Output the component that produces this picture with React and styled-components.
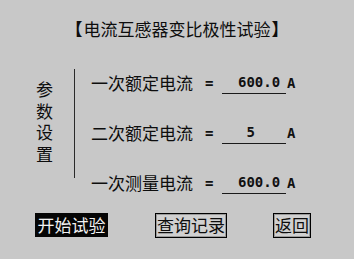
import React from 'react'
import styled, { createGlobalStyle, css } from 'styled-components'

const GlobalStyle = createGlobalStyle`
  html, body {
    margin: 0;
    padding: 0;
    background: #c8c8c8;
  }
  body {
    font-family: "Noto Sans CJK SC", "Noto Sans", sans-serif;
    color: #0d0d0d;
  }
`

const Screen = styled.div`
  width: 354px;
  height: 259px;
  box-sizing: border-box;
  padding-top: 20px;
  background: #c8c8c8;
  display: flex;
  flex-direction: column;
  overflow: hidden;
`

const Title = styled.h1`
  margin: 0 0 32px;
  font-size: 17px;
  line-height: 17px;
  font-weight: 400;
  text-align: center;
`

const Bracket = styled.span`
  font-weight: 700;
  margin: ${p => p.$open ? '0 1px 0 -3px' : '0 -3px 0 1px'};
`

const Body = styled.div`
  display: flex;
  align-items: flex-start;
  padding-left: 36px;
`

const SideLabel = styled.div`
  width: 16px;
  margin-top: 12px;
  writing-mode: vertical-rl;
  text-orientation: upright;
  font-size: 17px;
  line-height: 16px;
  letter-spacing: 4.7px;
`

const Divider = styled.div`
  width: 1px;
  height: 109px;
  margin: 0 16px 0 22px;
  background: #2a2a2a;
`

const Rows = styled.div`
  display: flex;
  flex-direction: column;
  gap: 27px;
  margin-top: 2px;
`

const Row = styled.div`
  display: flex;
  align-items: center;
  height: 23px;
`

const Label = styled.span`
  width: 114px;
  font-size: 17px;
  line-height: 23px;
`

const mono = css`
  font-family: "DejaVu Sans Mono", "Liberation Mono", monospace;
  font-size: 14px;
  font-weight: 700;
  color: #111;
`

const Equals = styled.span`
  ${mono}
  width: 17px;
`

const Field = styled.span`
  ${mono}
  box-sizing: border-box;
  width: 64px;
  height: 23px;
  line-height: 22px;
  padding-left: 16px;
  border-bottom: 1px solid #1a1a1a;
  white-space: pre;
`

const Unit = styled.span`
  ${mono}
  margin-left: 1px;
`

const Footer = styled.div`
  display: flex;
  align-items: flex-start;
  margin-top: 19px;
  padding-left: 35px;
`

const Button = styled.div`
  box-sizing: border-box;
  font-size: 17px;
  margin-right: ${p => p.$gap || 0}px;
  ${p => p.$active ? css`
    height: 24px;
    line-height: 24px;
    padding: 0 2.5px;
    background: #050505;
    color: #f2f2f2;
  ` : css`
    height: 25px;
    line-height: 21px;
    padding: 0 1px;
    border: 1px solid #000;
    box-shadow: inset 0 0 0 1px #9a9a9a;
    background: #d0d0d0;
    color: #0d0d0d;
  `}
`

const params = [
  { label: '一次额定电流', value: '600.0' },
  { label: '二次额定电流', value: ' 5' },
  { label: '一次测量电流', value: '600.0' }
]

const App = () => (
  <Screen>
    <GlobalStyle />
    <Title>
      <Bracket $open>【</Bracket>电流互感器变比极性试验<Bracket>】</Bracket>
    </Title>
    <Body>
      <SideLabel>参数设置</SideLabel>
      <Divider />
      <Rows>
        {params.map(p => (
          <Row key={p.label}>
            <Label>{p.label}</Label>
            <Equals>=</Equals>
            <Field>{p.value}</Field>
            <Unit>A</Unit>
          </Row>
        ))}
      </Rows>
    </Body>
    <Footer>
      <Button $active $gap={47}>开始试验</Button>
      <Button $gap={46}>查询记录</Button>
      <Button>返回</Button>
    </Footer>
  </Screen>
)

export default App
